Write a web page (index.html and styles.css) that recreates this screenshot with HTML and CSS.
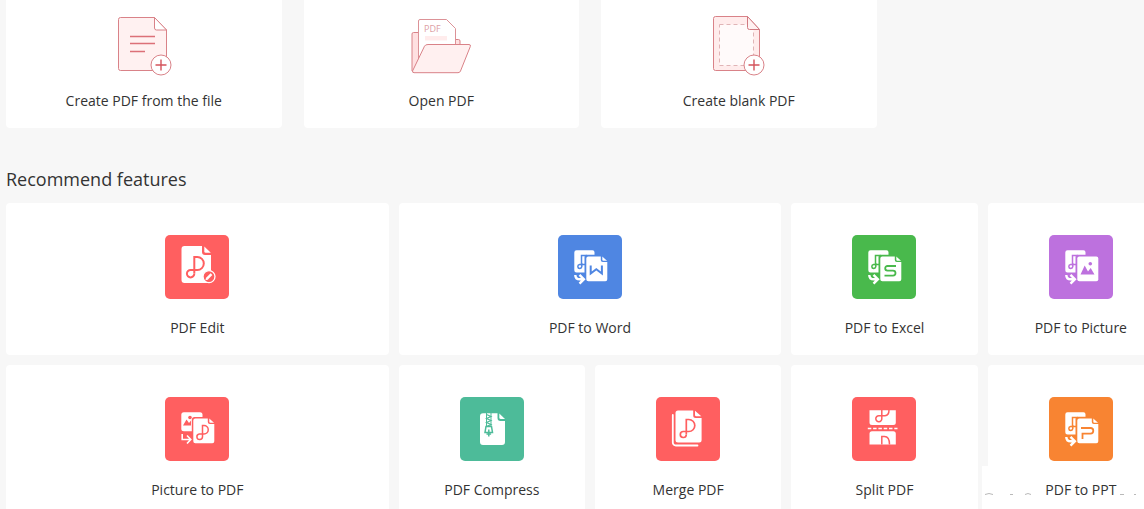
FILE: index.html
```html
<!DOCTYPE html>
<html lang="en">
<head>
<meta charset="utf-8">
<title>PDF tools</title>
<link rel="stylesheet" href="styles.css">
</head>
<body>
<svg class="defs" aria-hidden="true">
  <symbol id="convert-base" viewBox="0 0 64 64">
    <path fill="#fff" d="M18.500 15.300H34.500a2 2 0 0 1 2 2V19.800H28.500a2 2 0 0 0-2 2V37.500H18.500a2.200 2.200 0 0 1-2.200-2.200V17.500a2.200 2.200 0 0 1 2.200-2.200z"/>
    <path fill="none" stroke="currentColor" stroke-width="1.500" d="M23.500 30.500V20.500h4.500V24M27.500 29.500H21.500a2 2 0 1 0 2.300 2.200V28"/>
    <path fill="none" stroke="#fff" stroke-width="2.400" d="M17.300 40q0 4.300 4.500 4.300H25M21.500 39.800l4.400 4.400-4.400 4.400"/>
  </symbol>
  <symbol id="front-page" viewBox="0 0 64 64">
    <path fill="#fff" d="M30.300 21.400H42.800V25a2 2 0 0 0 2 2H49.300V44.200a2 2 0 0 1-2 2H30.300a2 2 0 0 1-2-2V23.400a2 2 0 0 1 2-2z"/>
    <path fill="#fff" d="M44.300 21.600L49 25.700H45.300a1 1 0 0 1-1-1z"/>
  </symbol>
  <symbol id="plus-badge" viewBox="0 0 22 22">
    <circle cx="11" cy="11" r="10" fill="#fff" stroke="#d98288"/>
    <path stroke="#d4535b" stroke-width="1.400" d="M5.500 11h11M11 5.500v11"/>
  </symbol>
</svg>

<main class="page">
  <section class="actions" aria-label="Start">
    <button class="card action" type="button">
      <svg class="action-icon" viewBox="0 0 60 64" aria-hidden="true">
        <path fill="#fff1f1" stroke="#d98288" d="M6.500 3.500H40.500L52.500 16V56.500H6.500a2 2 0 0 1-2-2V5.500a2 2 0 0 1 2-2z"/>
        <path fill="#fff" stroke="#d98288" d="M40.500 3.500V14a2 2 0 0 0 2 2H52.500z"/>
        <path stroke="#dc7078" stroke-width="1.500" d="M16 22.500H41M16 29.500H41M16 37.500H31"/>
        <use href="#plus-badge" x="36" y="40" width="22" height="22"/>
      </svg>
      <span>Create PDF from the file</span>
    </button>
    <button class="card action" type="button">
      <svg class="action-icon" viewBox="0 0 60 64" aria-hidden="true">
        <path fill="#ffe0e1" stroke="#d98288" d="M1 57V20a1.500 1.500 0 0 1 1.500-1.500H9L43 25.500H47.500a1.500 1.500 0 0 1 1.500 1.500V55z"/>
        <path fill="#fff" stroke="#dc9297" d="M7.500 48V7a1.500 1.500 0 0 1 1.500-1.500H35.500L44.500 14.500V38z"/>
        <text class="paper-text" x="13" y="18">PDF</text>
        <path fill="#ffecec" d="M14 22H36v4.500H14z"/>
        <path fill="#fff0f0" stroke="#d98288" d="M17 30.500H58q2 0 1.300 2L49.500 57q-.6 1.700-2.500 1.700H3q-2 0-1.300-2L13.500 32.200q.8-1.700 3.500-1.700z"/>
      </svg>
      <span>Open PDF</span>
    </button>
    <button class="card action" type="button">
      <svg class="action-icon" viewBox="0 0 60 64" aria-hidden="true">
        <path fill="#ffecec" stroke="#d98288" d="M6.500 2.500H38.500L50.500 15.500V56.500H6.500a2 2 0 0 1-2-2V4.500a2 2 0 0 1 2-2z"/>
        <path fill="#fffafa" stroke="#e0b4b6" stroke-dasharray="4 3" d="M10.500 10.500H44.500V51.500H10.500z"/>
        <path fill="#fff1f1" stroke="#d07980" d="M38.500 2.500V13.500a2 2 0 0 0 2 2H50.500z"/>
        <use href="#plus-badge" x="34" y="40" width="22" height="22"/>
      </svg>
      <span>Create blank PDF</span>
    </button>
  </section>

  <h2 class="heading">Recommend features</h2>

  <section class="features" aria-label="Recommend features">
    <button class="card feature wide" type="button">
      <svg class="tile red" viewBox="0 0 64 64" aria-hidden="true">
        <path fill="#fff" d="M19.500 11H37V17a3 3 0 0 0 3 3H46V45a3 3 0 0 1-3 3H19.500a3 3 0 0 1-3-3V14a3 3 0 0 1 3-3z"/>
        <path fill="#fff" d="M39.300 11.500L45.800 17.800H40.800a1.500 1.500 0 0 1-1.500-1.500z"/>
        <path fill="none" stroke="currentColor" stroke-width="2" d="M29.300 38.500V22h3a6.500 6.500 0 0 1 0 13H25.700a3.700 3.700 0 1 0 3.600 3.700"/>
        <circle cx="44" cy="41.600" r="6" fill="currentColor" stroke="#fff" stroke-width="1.300"/>
        <path stroke="#fff" stroke-width="2.400" d="M42 43.600l4.500-4.500"/><path fill="#fff" d="M40.500 45.200l.6-2.800 2.200 2.200z"/>
      </svg>
      <span>PDF Edit</span>
    </button>
    <button class="card feature wide" type="button">
      <svg class="tile blue" viewBox="0 0 64 64" aria-hidden="true">
        <use href="#convert-base"/><use href="#front-page"/>
        <path fill="none" stroke="currentColor" stroke-width="2" d="M32.700 30.500V38.500L38.300 34.300 43.900 38.500V30.500"/>
      </svg>
      <span>PDF to Word</span>
    </button>
    <button class="card feature" type="button">
      <svg class="tile green" viewBox="0 0 64 64" aria-hidden="true">
        <use href="#convert-base"/><use href="#front-page"/>
        <path fill="none" stroke="currentColor" stroke-width="1.800" d="M44 31H35.500a2.200 2.200 0 0 0 0 4.600H41a2.500 2.500 0 0 1 0 5H32.500"/>
      </svg>
      <span>PDF to Excel</span>
    </button>
    <button class="card feature" type="button">
      <svg class="tile purple" viewBox="0 0 64 64" aria-hidden="true">
        <use href="#convert-base"/>
        <rect x="28.300" y="21.400" width="21" height="24.800" rx="2" fill="#fff"/>
        <circle cx="41.300" cy="28.700" r="1.800" fill="currentColor"/>
        <path fill="currentColor" d="M31.500 39.500L35.700 30.500 39 36.500 41.700 33 45.500 39.500z"/>
      </svg>
      <span>PDF to Picture</span>
    </button>

    <button class="card feature wide" type="button">
      <svg class="tile red" viewBox="0 0 64 64" aria-hidden="true">
        <rect x="16.300" y="15.300" width="21.200" height="19" rx="2.500" fill="#fff"/>
        <path fill="currentColor" d="M18 28.500L21.500 22.500 24 26 26 23.500V28.500z"/>
        <circle cx="25" cy="20.500" r="1.800" fill="currentColor"/>
        <path fill="currentColor" d="M30 20H38V35H26.800V23a3 3 0 0 1 3.200-3z"/>
        <use href="#front-page"/>
        <path fill="none" stroke="currentColor" stroke-width="1.500" d="M37.500 40V28.500h1.500a4 4 0 0 1 0 8.500H34.300a2.800 2.800 0 1 0 3.200 2.800"/>
        <path fill="none" stroke="#fff" stroke-width="1.600" d="M17.200 37V42.500H25.500M22 38.500l3.800 4L22 46.500"/>
      </svg>
      <span>Picture to PDF</span>
    </button>
    <button class="card feature" type="button">
      <svg class="tile teal" viewBox="0 0 64 64" aria-hidden="true">
        <path fill="#fff" d="M23 16.300H37.500V21a3 3 0 0 0 3 3H45V45a3 3 0 0 1-3 3H23a3 3 0 0 1-3-3V19.300a3 3 0 0 1 3-3z"/>
        <path fill="#fff" d="M39.300 16.500L45 22H40.800a1.500 1.500 0 0 1-1.500-1.500z"/>
        <path fill="none" stroke="currentColor" stroke-width="1" d="M26.500 16V30M31 16V30"/>
        <path fill="none" stroke="currentColor" stroke-width="1.200" d="M26.500 17.500l4.500 2-4.500 2 4.500 2-4.500 2 4.500 2-4.500 2"/>
        <path fill="none" stroke="currentColor" stroke-width="1.500" d="M26 29.500H31.500L32.500 35.500H25z"/>
        <path fill="none" stroke="currentColor" stroke-width="1.500" d="M28.800 32.500V39.500M26.500 37h4.600"/>
      </svg>
      <span>PDF Compress</span>
    </button>
    <button class="card feature" type="button">
      <svg class="tile red" viewBox="0 0 64 64" aria-hidden="true">
        <path fill="none" stroke="#fff" stroke-width="1.800" stroke-linecap="round" d="M16.800 18V45.500a3 3 0 0 0 3 3H41.500"/>
        <path fill="#fff" d="M22 13.400H37.200V18.500a2.500 2.500 0 0 0 2.500 2.500H45.600V43a2.500 2.500 0 0 1-2.500 2.500H22a2.500 2.500 0 0 1-2.500-2.500V15.900a2.500 2.500 0 0 1 2.500-2.500z"/>
        <path fill="#fff" d="M39 13.700L45.300 19.300H40.300a1.300 1.300 0 0 1-1.300-1.300z"/>
        <path fill="none" stroke="currentColor" stroke-width="1.700" d="M30.300 37.500V22.500h2.500a6 6 0 0 1 0 12H27.300a3 3 0 1 0 3 3.200"/>
      </svg>
      <span>Merge PDF</span>
    </button>
    <button class="card feature" type="button">
      <svg class="tile red" viewBox="0 0 64 64" aria-hidden="true">
        <path fill="#fff" d="M17.500 13.300H43.800V25.600a2.500 2.500 0 0 1-2.500 2.500H20a2.500 2.500 0 0 1-2.500-2.500z"/>
        <path fill="#fff" d="M20 34.300H41.300a2.500 2.500 0 0 1 2.500 2.500V47.500H17.500V36.800a2.500 2.500 0 0 1 2.500-2.500z"/>
        <path stroke="#fff" stroke-width="1.500" stroke-dasharray="3.500 1.800" d="M15.800 31.400H45.500"/>
        <path fill="none" stroke="currentColor" stroke-width="1.500" d="M29.800 13V21.500a3 3 0 1 1-3-2.800H33q4-.3 4-5.700M29.800 47.500V39.500H32.500q5 0 5 8"/>
      </svg>
      <span>Split PDF</span>
    </button>
    <button class="card feature smudged" type="button">
      <svg class="tile orange" viewBox="0 0 64 64" aria-hidden="true">
        <use href="#convert-base"/><use href="#front-page"/>
        <path fill="none" stroke="currentColor" stroke-width="1.800" d="M32 31H41.500a2.800 2.800 0 0 1 0 5.600H33.500V42"/>
      </svg>
      <span>PDF to PPT</span>
      <svg class="smudge" viewBox="0 0 162 43" aria-hidden="true">
        <path fill="#fff" d="M0 0H8V43H0z"/>
        <path fill="none" stroke="#b9b9b9" d="M3 28.500q4-2 8 0M28 28.500h3M43 28.500q3-2 6 0M138 28.500h4M152 28.500h2"/>
      </svg>
    </button>
  </section>
</main>
</body>
</html>
```

FILE: styles.css
```css
* {
  box-sizing: border-box;
}

body {
  margin: 0;
  overflow: hidden;
  background: #f7f7f7;
  color: #333;
  font-family: "Open Sans", "Noto Sans", sans-serif;
}

.defs {
  position: absolute;
  width: 0;
  height: 0;
}

/* The board runs past the right edge of the window. */
.page {
  margin: 0 -30px 0 6px;
}

.actions {
  display: grid;
  grid-template-columns: repeat(4, 1fr);
  gap: 22px;
}

.card {
  display: flex;
  flex-direction: column;
  align-items: center;
  margin: 0;
  border: 0;
  border-radius: 4px;
  background: #fff;
  color: inherit;
  font: inherit;
  font-size: 14px;
  line-height: 20px;
  cursor: pointer;
}

.action {
  gap: 13px;
  padding: 14px 12px 17px;
  border-radius: 0 0 4px 4px;
}

.action-icon {
  width: 60px;
  height: 64px;
}

.paper-text {
  fill: #dda0a4;
  font-size: 9px;
}

.heading {
  margin: 38px 0 11px;
  font-size: 18px;
  font-weight: 400;
  line-height: 26px;
}

.features {
  display: grid;
  grid-template-columns: repeat(6, 1fr);
  gap: 10px;
}

.feature {
  gap: 19px;
  padding: 32px 12px 17px;
}

.wide {
  grid-column: span 2;
}

.tile {
  width: 64px;
  height: 64px;
  border-radius: 5px;
}

.red {
  background: #ff5f60;
  color: #ff5f60;
}

.blue {
  background: #4f86e2;
  color: #4f86e2;
}

.green {
  background: #49b94c;
  color: #49b94c;
}

.purple {
  background: #bd71de;
  color: #bd71de;
}

.teal {
  background: #4dbb99;
  color: #4dbb99;
}

.orange {
  background: #f88432;
  color: #f88432;
}

.smudged {
  position: relative;
}

.smudge {
  position: absolute;
  top: 101px;
  left: -6px;
  width: 162px;
  height: 43px;
}
```
